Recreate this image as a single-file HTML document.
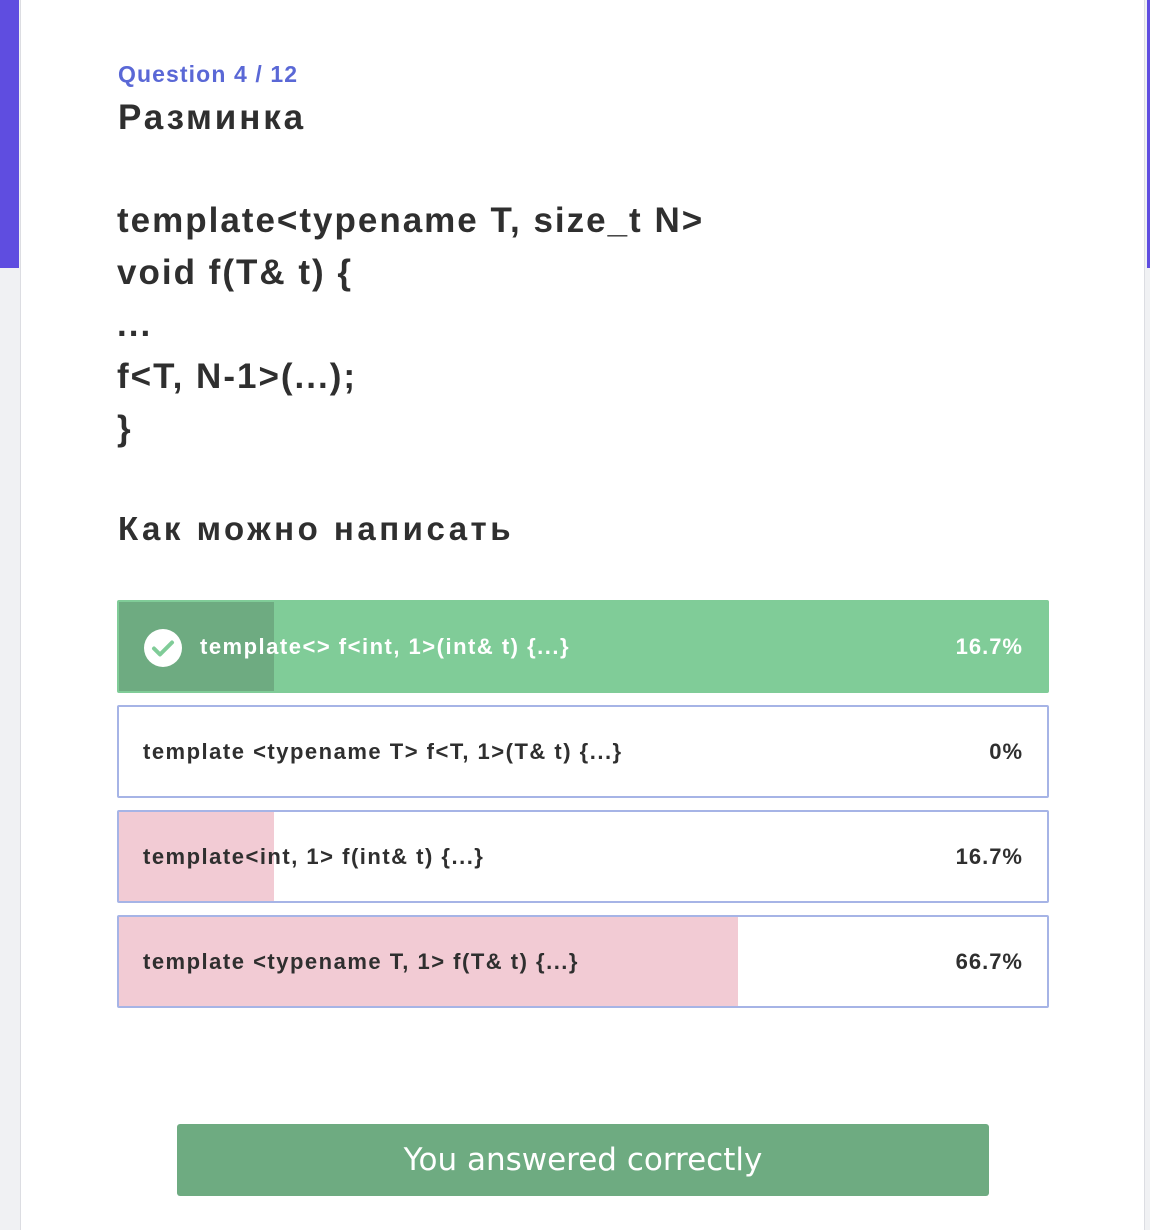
<!DOCTYPE html>
<html><head><meta charset="utf-8"><style>
*{margin:0;padding:0;box-sizing:border-box}
body{width:1150px;height:1230px;background:#f0f1f3;position:relative;overflow:hidden;font-family:"Liberation Sans",sans-serif;color:#2f2f2f}
.lbar{position:absolute;left:0;top:0;width:19px;height:268px;background:#5f4de0}
.rbar{position:absolute;right:0;top:0;width:3px;height:268px;background:#5f4de0}
.card{position:absolute;left:20px;top:0;width:1125px;height:1230px;background:#fff;border-left:1px solid #dcdde2;border-right:1px solid #dcdde2}
.q{position:absolute;left:118px;top:61px;font-size:23px;font-weight:bold;color:#5a68d6;letter-spacing:1.1px}
.t{position:absolute;left:118px;top:98px;font-size:35px;font-weight:bold;letter-spacing:2.9px}
.code{position:absolute;left:117px;top:195px;font-size:35px;font-weight:bold;line-height:52px;letter-spacing:2px}
.h{position:absolute;left:118px;top:510px;font-size:33px;font-weight:bold;letter-spacing:3.5px}
.opt{position:absolute;left:117px;width:932px;height:93px;border:2px solid #a6b4e6;border-radius:2px;background:#fff;overflow:hidden}
.opt .fill{position:absolute;left:0;top:0;bottom:0}
.opt .tx{position:absolute;left:24px;top:0;line-height:89px;font-size:22px;font-weight:bold;letter-spacing:1.5px}
.opt .pc{position:absolute;right:24px;top:0;line-height:89px;font-size:22px;font-weight:bold;letter-spacing:1px}
.btn{position:absolute;left:177px;top:1124px;width:812px;height:72px;background:#6eab81;border-radius:3px;color:#fff;font-family:"DejaVu Sans","Liberation Sans",sans-serif;font-weight:normal;font-size:31px;text-align:center;line-height:72px;letter-spacing:0px}
</style></head><body>
<div class="lbar"></div><div class="rbar"></div>
<div class="card"></div>
<div class="q">Question 4 / 12</div>
<div class="t">Разминка</div>
<div class="code">template&lt;typename T, size_t N&gt;<br>void f(T&amp; t) {<br>...<br>f&lt;T, N-1&gt;(...);<br>}</div>
<div class="h">Как можно написать</div>

<div class="opt" style="top:600px;background:#80cc98;border-color:#80cc98">
 <div class="fill" style="width:155px;background:#6eab81"></div>
 <svg style="position:absolute;left:24px;top:26px" width="40" height="40" viewBox="0 0 40 40"><circle cx="20" cy="20" r="19" fill="#fff"/><path d="M11 20.5l6 6 12-12" stroke="#80cc98" stroke-width="4" fill="none" stroke-linecap="round" stroke-linejoin="round"/></svg>
 <div class="tx" style="left:81px;color:#fff">template&lt;&gt; f&lt;int, 1&gt;(int&amp; t) {...}</div>
 <div class="pc" style="color:#fff">16.7%</div>
</div>
<div class="opt" style="top:705px">
 <div class="tx">template &lt;typename T&gt; f&lt;T, 1&gt;(T&amp; t) {...}</div>
 <div class="pc">0%</div>
</div>
<div class="opt" style="top:810px">
 <div class="fill" style="width:155px;background:#f2cbd4"></div>
 <div class="tx">template&lt;int, 1&gt; f(int&amp; t) {...}</div>
 <div class="pc">16.7%</div>
</div>
<div class="opt" style="top:915px">
 <div class="fill" style="width:619px;background:#f2cbd4"></div>
 <div class="tx">template &lt;typename T, 1&gt; f(T&amp; t) {...}</div>
 <div class="pc">66.7%</div>
</div>
<div class="btn">You answered correctly</div>
</body></html>
